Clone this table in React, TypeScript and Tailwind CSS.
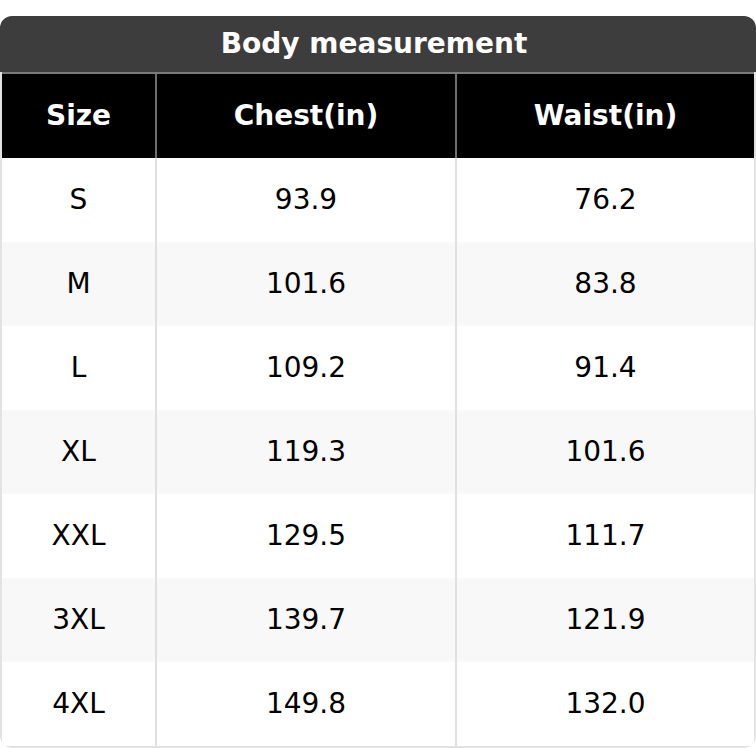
const ROWS = [
  ['S', '93.9', '76.2'],
  ['M', '101.6', '83.8'],
  ['L', '109.2', '91.4'],
  ['XL', '119.3', '101.6'],
  ['XXL', '129.5', '111.7'],
  ['3XL', '139.7', '121.9'],
  ['4XL', '149.8', '132.0'],
];

export default function App() {
  return (
    <div className="w-[756px] bg-white pt-4 font-['DejaVu_Sans',sans-serif]">
      <div className="overflow-hidden rounded-[12px]">
        <div className="flex h-[56px] items-center justify-center bg-[#3d3d3d] pr-2 text-[28px] font-bold text-white">
          Body measurement
        </div>
        <div className="rounded-b-[12px] border-x-2 border-b-2 border-[#e2e2e2]">
          <div className="grid h-[86px] grid-cols-[153px_300px_1fr] border-t-2 border-[#7a7a7a] bg-black text-[28px] font-bold text-white">
            <div className="flex items-center justify-center">Size</div>
            <div className="flex items-center justify-center border-l-2 border-[#6e6e6e]">Chest(in)</div>
            <div className="flex items-center justify-center border-l-2 border-[#6e6e6e]">Waist(in)</div>
          </div>
          {ROWS.map((r, i) => (
            <div
              key={r[0]}
              className={`grid h-[84px] grid-cols-[153px_300px_1fr] text-[28px] text-black ${
                i % 2 === 1 ? 'bg-[#f8f8f8]' : 'bg-white'
              }`}
            >
              <div className="flex items-center justify-center">{r[0]}</div>
              <div className="flex items-center justify-center border-l-2 border-[#e0e0e0]">{r[1]}</div>
              <div className="flex items-center justify-center border-l-2 border-[#e0e0e0]">{r[2]}</div>
            </div>
          ))}
        </div>
      </div>
    </div>
  );
}
